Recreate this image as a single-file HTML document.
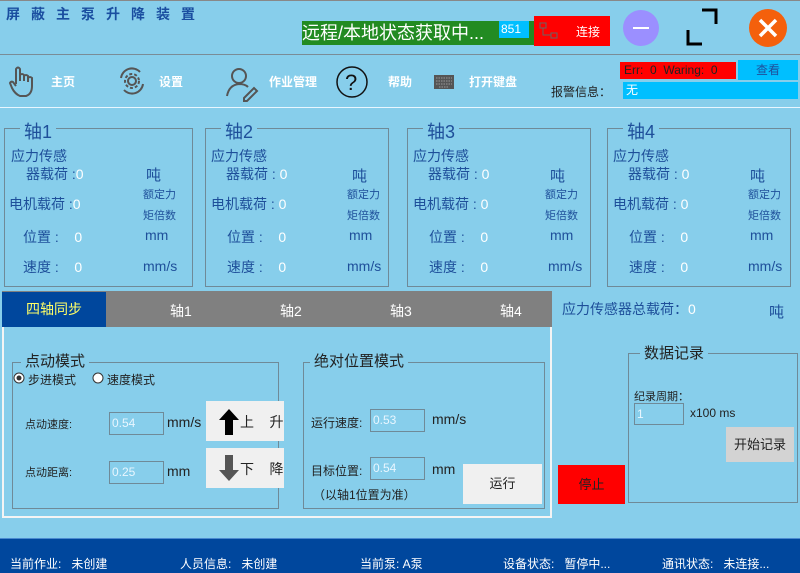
<!DOCTYPE html>
<html><head><meta charset="utf-8"><style>
*{margin:0;padding:0;box-sizing:border-box}
body{width:800px;height:573px;background:#87ceeb;font-family:"Liberation Sans","Noto Sans CJK SC",sans-serif;position:relative;overflow:hidden;color:#1e4f9a}
.a{position:absolute;white-space:nowrap}
.box{position:absolute;border:1px solid #6f8a98}
.lg{position:absolute;background:#87ceeb;padding:0 4px;font-size:18px;color:#1e4f9a}
.w{color:#fff}
.u{font-size:14px !important}
.inp{position:absolute;border:1px solid #6f8a98;color:#e8f6ff;font-size:12px;padding:3px 2px;background:#87ceeb}
.btn{position:absolute;background:#f0f0f0;color:#222;font-size:13px;text-align:center}
.d{color:#222}
</style></head><body>
<div class="a" style="left:0;top:0;width:800px;height:1px;background:#888"></div>
<div class="a" style="left:6px;top:4px;font-size:14px;font-weight:bold;color:#1a4ea0;letter-spacing:11px">屏蔽主泵升降装置</div>
<div class="a" style="left:302px;top:21px;width:232px;height:24px;background:#228b22;color:#fff;font-size:18px;line-height:24px">远程/本地状态获取中...</div>
<div class="a" style="left:499px;top:21px;width:30px;height:17px;background:#00bfff;color:#fff;font-size:12px;line-height:17px;padding-left:2px">851</div>
<div class="a" style="left:534px;top:16px;width:76px;height:30px;background:#f00"><svg width="76" height="30"><rect x="6" y="7" width="6" height="5" fill="none" stroke="#666"/><rect x="17" y="17" width="6" height="5" fill="none" stroke="#666"/><path d="M9 12v7h8" fill="none" stroke="#666"/><text x="42" y="20" font-size="12" fill="#fff" font-family="Noto Sans CJK SC">连接</text></svg></div>
<svg class="a" style="left:622px;top:10px" width="38" height="38"><circle cx="19" cy="18" r="18" fill="#9b8fff"/><path d="M11 18h16" stroke="#fff" stroke-width="2"/></svg>
<svg class="a" style="left:685px;top:6px" width="42" height="42"><path d="M17 4h14v14M3 24v14h14" fill="none" stroke="#000" stroke-width="3"/></svg>
<svg class="a" style="left:748px;top:9px" width="40" height="40"><circle cx="20" cy="19" r="19" fill="#f4600c"/><path d="M12 11l16 16M28 11l-16 16" stroke="#fff" stroke-width="3.5"/></svg>
<div class="a" style="left:0;top:54px;width:800px;height:1px;background:#7a8c96"></div>
<div class="a" style="left:0;top:107px;width:800px;height:1px;background:#e8f6ff"></div>
<svg class="a" style="left:8px;top:64px" width="32" height="36"><path d="M8 20V5q2-3 4 0v12M12 11q2-2 4 0v6M16 12q2-2 4 0v6M20 14q2-2 4 0v8q0 8-6 10h-6q-5-2-8-8l-2-5q1-2 3-1l3 4" fill="none" stroke="#555" stroke-width="2"/></svg>
<div class="a" style="left:51px;top:73px;font-size:12px;font-weight:bold;color:#fff">主页</div>
<svg class="a" style="left:117px;top:66px" width="30" height="30"><circle cx="15" cy="15" r="4" fill="none" stroke="#555" stroke-width="2"/><circle cx="15" cy="15" r="7" fill="none" stroke="#555" stroke-width="2" stroke-dasharray="3 2"/><path d="M4 12a11 11 0 0 1 19-6M26 18a11 11 0 0 1-19 6" fill="none" stroke="#555" stroke-width="2"/></svg>
<div class="a" style="left:159px;top:73px;font-size:12px;font-weight:bold;color:#fff">设置</div>
<svg class="a" style="left:225px;top:66px" width="36" height="36"><circle cx="14" cy="10" r="7" fill="none" stroke="#555" stroke-width="2"/><path d="M2 30q2-11 12-12q6 0 9 3M19 32l10-10 3 3-10 10h-3z" fill="none" stroke="#555" stroke-width="2"/></svg>
<div class="a" style="left:269px;top:73px;font-size:12px;font-weight:bold;color:#fff">作业管理</div>
<svg class="a" style="left:335px;top:66px" width="36" height="34"><circle cx="17" cy="16" r="15" fill="none" stroke="#111" stroke-width="1.5"/><text x="10" y="24" font-size="22" fill="#111">?</text></svg>
<div class="a" style="left:388px;top:73px;font-size:12px;font-weight:bold;color:#fff">帮助</div>
<svg class="a" style="left:434px;top:75px" width="20" height="14"><rect width="20" height="14" fill="#555"/><path d="M2 3h16M2 6h16M2 9h16M5 12h10" stroke="#999" stroke-dasharray="1.5 1"/></svg>
<div class="a" style="left:469px;top:73px;font-size:12px;font-weight:bold;color:#fff">打开键盘</div>
<div class="a" style="left:620px;top:62px;width:116px;height:17px;background:#f00;color:#222;font-size:12px;line-height:17px;padding-left:4px">Err:&nbsp; 0&nbsp; Waring:&nbsp; 0</div>
<div class="a" style="left:738px;top:60px;width:60px;height:20px;background:#00bfff;color:#1e4f9a;font-size:12px;line-height:20px;text-align:center">查看</div>
<div class="a" style="left:551px;top:83px;font-size:12px;color:#222">报警信息：</div>
<div class="a" style="left:623px;top:82px;width:175px;height:17px;background:#00bfff;color:#fff;font-size:12px;line-height:17px;padding-left:3px">无</div>

<div class="box" style="left:4px;top:128px;width:189px;height:159px"></div><div class="lg" style="left:20px;top:118px">轴1</div>
<div class="box" style="left:205px;top:128px;width:184px;height:159px"></div><div class="lg" style="left:221px;top:118px">轴2</div>
<div class="box" style="left:407px;top:128px;width:184px;height:159px"></div><div class="lg" style="left:423px;top:118px">轴3</div>
<div class="box" style="left:607px;top:128px;width:184px;height:159px"></div><div class="lg" style="left:623px;top:118px">轴4</div>
<div class="a" style="left:11px;top:148px;font-size:14px;line-height:16px">应力传感</div>
<div class="a" style="left:26px;top:164px;font-size:14px">器载荷 :<span class="w">0</span></div>
<div class="a" style="left:146px;top:164px;font-size:15px">吨</div>
<div class="a" style="left:143px;top:186px;font-size:11px">额定力</div>
<div class="a" style="left:143px;top:207px;font-size:11px">矩倍数</div>
<div class="a" style="left:9px;top:194px;font-size:14px">电机载荷 :<span class="w">0</span></div>
<div class="a" style="left:23px;top:227px;font-size:14px">位置 :&nbsp;&nbsp;&nbsp; <span class="w">0</span></div>
<div class="a u" style="left:145px;top:227px">mm</div>
<div class="a" style="left:23px;top:257px;font-size:14px">速度 :&nbsp;&nbsp;&nbsp; <span class="w">0</span></div>
<div class="a u" style="left:143px;top:258px">mm/s</div>

<div class="a" style="left:211px;top:148px;font-size:14px;line-height:16px">应力传感</div>
<div class="a" style="left:226px;top:164px;font-size:14px">器载荷 : <span class="w">0</span></div>
<div class="a" style="left:352px;top:165px;font-size:15px">吨</div>
<div class="a" style="left:347px;top:186px;font-size:11px">额定力</div>
<div class="a" style="left:347px;top:207px;font-size:11px">矩倍数</div>
<div class="a" style="left:211px;top:194px;font-size:14px">电机载荷 : <span class="w">0</span></div>
<div class="a" style="left:227px;top:227px;font-size:14px">位置 :&nbsp;&nbsp;&nbsp; <span class="w">0</span></div>
<div class="a u" style="left:349px;top:227px">mm</div>
<div class="a" style="left:227px;top:257px;font-size:14px">速度 :&nbsp;&nbsp;&nbsp; <span class="w">0</span></div>
<div class="a u" style="left:347px;top:258px">mm/s</div>

<div class="a" style="left:413px;top:148px;font-size:14px;line-height:16px">应力传感</div>
<div class="a" style="left:428px;top:164px;font-size:14px">器载荷 : <span class="w">0</span></div>
<div class="a" style="left:550px;top:165px;font-size:15px">吨</div>
<div class="a" style="left:545px;top:186px;font-size:11px">额定力</div>
<div class="a" style="left:545px;top:207px;font-size:11px">矩倍数</div>
<div class="a" style="left:413px;top:194px;font-size:14px">电机载荷 : <span class="w">0</span></div>
<div class="a" style="left:429px;top:227px;font-size:14px">位置 :&nbsp;&nbsp;&nbsp; <span class="w">0</span></div>
<div class="a u" style="left:550px;top:227px">mm</div>
<div class="a" style="left:429px;top:257px;font-size:14px">速度 :&nbsp;&nbsp;&nbsp; <span class="w">0</span></div>
<div class="a u" style="left:548px;top:258px">mm/s</div>

<div class="a" style="left:613px;top:148px;font-size:14px;line-height:16px">应力传感</div>
<div class="a" style="left:628px;top:164px;font-size:14px">器载荷 : <span class="w">0</span></div>
<div class="a" style="left:750px;top:165px;font-size:15px">吨</div>
<div class="a" style="left:748px;top:186px;font-size:11px">额定力</div>
<div class="a" style="left:748px;top:207px;font-size:11px">矩倍数</div>
<div class="a" style="left:613px;top:194px;font-size:14px">电机载荷 : <span class="w">0</span></div>
<div class="a" style="left:629px;top:227px;font-size:14px">位置 :&nbsp;&nbsp;&nbsp; <span class="w">0</span></div>
<div class="a u" style="left:750px;top:227px">mm</div>
<div class="a" style="left:629px;top:257px;font-size:14px">速度 :&nbsp;&nbsp;&nbsp; <span class="w">0</span></div>
<div class="a u" style="left:748px;top:258px">mm/s</div>

<div class="a" style="left:2px;top:291px;width:550px;height:227px;border:2px solid #f4f4f4;border-top:none"></div>
<div class="a" style="left:2px;top:291px;width:550px;height:36px;background:#808080"></div>
<div class="a" style="left:2px;top:292px;width:104px;height:35px;background:#00479d;color:#ffff66;font-size:14px;line-height:35px;text-align:center">四轴同步</div>
<div class="a" style="left:170px;top:301px;font-size:14px;color:#fff">轴1</div>
<div class="a" style="left:280px;top:301px;font-size:14px;color:#fff">轴2</div>
<div class="a" style="left:390px;top:301px;font-size:14px;color:#fff">轴3</div>
<div class="a" style="left:500px;top:301px;font-size:14px;color:#fff">轴4</div>

<div class="box" style="left:12px;top:362px;width:267px;height:147px"></div><div class="lg" style="left:21px;top:350px;color:#222;font-size:15px">点动模式</div>
<svg class="a" style="left:13px;top:372px" width="12" height="12"><circle cx="6" cy="6" r="5" fill="#fff" stroke="#333"/><circle cx="6" cy="6" r="2.5" fill="#333"/></svg>
<div class="a d" style="left:28px;top:371px;font-size:12px">步进模式</div>
<svg class="a" style="left:92px;top:372px" width="12" height="12"><circle cx="6" cy="6" r="5" fill="#fff" stroke="#333"/></svg>
<div class="a d" style="left:107px;top:371px;font-size:12px">速度模式</div>
<div class="a d" style="left:25px;top:416px;font-size:11px">点动速度:</div>
<div class="inp" style="left:109px;top:412px;width:55px;height:23px">0.54</div>
<div class="a d" style="left:167px;top:414px;font-size:14px">mm/s</div>
<div class="btn" style="left:206px;top:401px;width:78px;height:40px;font-size:14px"><svg class="a" style="left:11px;top:7px" width="24" height="28"><path d="M12 1L2 12h6v15h8V12h6z" fill="#000"/></svg><span class="a" style="left:34px;top:11px">上&nbsp;&nbsp;&nbsp; 升</span></div>
<div class="a d" style="left:25px;top:464px;font-size:11px">点动距离:</div>
<div class="inp" style="left:109px;top:461px;width:55px;height:23px">0.25</div>
<div class="a d" style="left:167px;top:463px;font-size:14px">mm</div>
<div class="btn" style="left:206px;top:448px;width:78px;height:40px;font-size:14px"><svg class="a" style="left:11px;top:6px" width="24" height="28"><path d="M12 27L2 16h6V1h8v15h6z" fill="#555"/></svg><span class="a" style="left:34px;top:11px">下&nbsp;&nbsp;&nbsp; 降</span></div>

<div class="box" style="left:303px;top:362px;width:242px;height:147px"></div><div class="lg" style="left:310px;top:350px;color:#222;font-size:15px">绝对位置模式</div>
<div class="a d" style="left:311px;top:414px;font-size:12px">运行速度:</div>
<div class="inp" style="left:370px;top:409px;width:55px;height:23px">0.53</div>
<div class="a d" style="left:432px;top:411px;font-size:14px">mm/s</div>
<div class="a d" style="left:311px;top:462px;font-size:12px">目标位置:</div>
<div class="inp" style="left:370px;top:457px;width:55px;height:23px">0.54</div>
<div class="a d" style="left:432px;top:461px;font-size:14px">mm</div>
<div class="a d" style="left:313px;top:486px;font-size:12px">（以轴1位置为准）</div>
<div class="btn" style="left:463px;top:464px;width:79px;height:40px;line-height:40px">运行</div>

<div class="a" style="left:562px;top:299px;font-size:14px">应力传感器总载荷：<span class="w">0</span></div>
<div class="a" style="left:769px;top:301px;font-size:15px">吨</div>
<div class="box" style="left:628px;top:353px;width:170px;height:150px"></div><div class="lg" style="left:640px;top:342px;color:#222;font-size:15px">数据记录</div>
<div class="a d" style="left:634px;top:388px;font-size:11px">纪录周期：</div>
<div class="inp" style="left:634px;top:403px;width:50px;height:22px">1</div>
<div class="a d" style="left:690px;top:406px;font-size:12px">x100 ms</div>
<div class="btn" style="left:726px;top:427px;width:68px;height:35px;line-height:35px;background:#d3d3d3">开始记录</div>
<div class="a" style="left:558px;top:465px;width:67px;height:39px;background:#f00;color:#222;font-size:13px;line-height:39px;text-align:center">停止</div>

<div class="a" style="left:0;top:538px;width:800px;height:35px;background:#00479d;border-top:1px solid #4a8ad0"></div>
<div class="a" style="left:10px;top:555px;font-size:12px;color:#fff">当前作业:&nbsp;&nbsp; 未创建</div>
<div class="a" style="left:180px;top:555px;font-size:12px;color:#fff">人员信息:&nbsp;&nbsp; 未创建</div>
<div class="a" style="left:360px;top:555px;font-size:12px;color:#fff">当前泵: A泵</div>
<div class="a" style="left:503px;top:555px;font-size:12px;color:#fff">设备状态:&nbsp;&nbsp; 暂停中...</div>
<div class="a" style="left:662px;top:555px;font-size:12px;color:#fff">通讯状态:&nbsp;&nbsp; 未连接...</div>
</body></html>
